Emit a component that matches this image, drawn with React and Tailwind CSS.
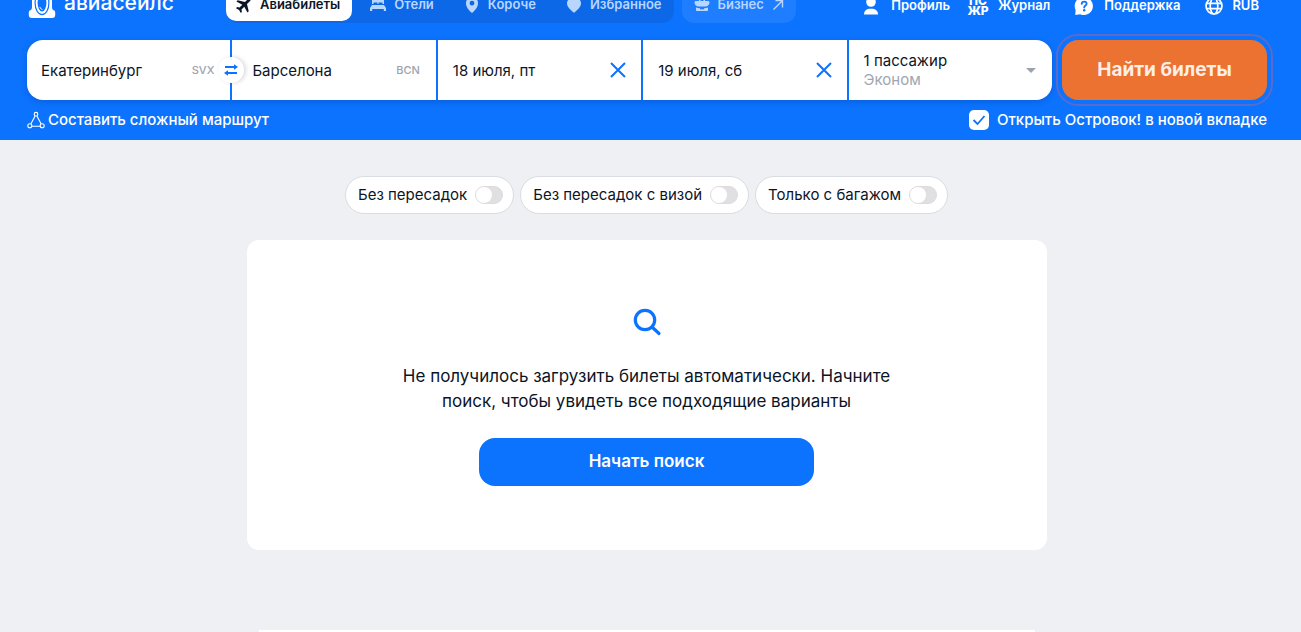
import React from "react";

const PlaneIcon = () => (
  <svg viewBox="0 0 16 16" className="size-4 shrink-0" fill="currentColor" aria-hidden="true">
    <g transform="rotate(45 8 8)">
      <path d="M8-1.2c.8 0 1.4.9 1.4 2v4.4l6.4 3.9v1.8L9.4 9v3.9l2 1.5v1.5L8 15l-3.4.9v-1.5l2-1.5V9L.2 10.900V9.100l6.400-3.900V.8c0-1.100.6-2 1.400-2z" />
    </g>
  </svg>
);

const BedIcon = () => (
  <svg viewBox="0 0 16 16" className="size-4 shrink-0" fill="currentColor" aria-hidden="true">
    <path d="M2 1h12v6h-1.500V5.500h-4V7h-1V5.500h-4V7H2z" />
    <path d="M2 8h12l2 3v3h-2.200v-2H2.200v2H0v-3z" />
  </svg>
);

const PinIcon = () => (
  <svg viewBox="0 0 16 16" className="size-4 shrink-0" fill="currentColor" aria-hidden="true">
    <path
      fillRule="evenodd"
      d="M8 0a6 6 0 0 1 6 6.200c0 4.100-3.300 7.300-5.300 9.300a1 1 0 0 1-1.400 0C5.300 13.500 2 10.300 2 6.200A6 6 0 0 1 8 0zm0 3.800a2.400 2.400 0 1 0 0 4.800 2.400 2.400 0 0 0 0-4.800z"
    />
  </svg>
);

const HeartIcon = () => (
  <svg viewBox="0 0 16 16" className="size-4 shrink-0" fill="currentColor" aria-hidden="true">
    <path d="M8 3C6 .5 1 1.500 1 6.300 1 10 4.500 13 7.200 15.200a1.200 1.200 0 0 0 1.600 0C11.500 13 15 10 15 6.300 15 1.500 10 .5 8 3z" />
  </svg>
);

const CaseIcon = () => (
  <svg viewBox="0 0 16 16" className="size-4 shrink-0" fill="currentColor" aria-hidden="true">
    <path
      fillRule="evenodd"
      d="M5 4V2.500C5 1.700 5.700 1 6.500 1h3c.8 0 1.500.7 1.500 1.500V4h3c.9 0 1.500.6 1.500 1.400 0 2.200-1.700 3.800-4.500 4.100H5C2.200 9.200.5 7.600.5 5.400.5 4.600 1.100 4 2 4zm1.500 0h3V2.500h-3z"
    />
    <path d="M2 10.600c1.200.5 2.500.7 4 .7v1h4v-1c1.500 0 2.800-.2 4-.7V13c0 .6-.4 1-1 1H3c-.6 0-1-.4-1-1z" />
  </svg>
);

const ArrowOutIcon = () => (
  <svg viewBox="0 0 12 12" className="size-3 shrink-0" fill="none" stroke="currentColor" strokeWidth="1.400" aria-hidden="true">
    <path d="M1.500 10.500 10.300 1.700M3.500 1.500h7v7" />
  </svg>
);

const UserIcon = () => (
  <svg viewBox="0 0 20 20" className="size-5 shrink-0" fill="currentColor" aria-hidden="true">
    <circle cx="10" cy="6" r="4.800" />
    <path d="M3 18.500c0-3.700 2.500-5.700 7-5.700s7 2 7 5.700z" />
  </svg>
);

const JournalIcon = () => (
  <span className="flex w-5 shrink-0 flex-col items-center text-[12px] leading-[10px] font-extrabold" aria-hidden="true">
    <span>ПС</span>
    <span>ЖР</span>
  </span>
);

const SupportIcon = () => (
  <svg viewBox="0 0 20 20" className="size-5 shrink-0" aria-hidden="true">
    <path fill="currentColor" d="M10 1a9 9 0 1 1-3.800 17.200L1.300 19l.3-5A9 9 0 0 1 10 1z" />
    <path
      fill="none"
      stroke="#0c73fe"
      strokeWidth="1.800"
      strokeLinecap="round"
      d="M7.700 7.900c.1-1.400 1.100-2.200 2.500-2.200s2.400.9 2.400 2.100c0 1.700-2.400 1.800-2.400 3.700"
    />
    <circle cx="10.200" cy="14.300" r="1.200" fill="#0c73fe" />
  </svg>
);

const GlobeIcon = () => (
  <svg viewBox="0 0 20 20" className="size-5 shrink-0" fill="none" stroke="currentColor" strokeWidth="1.700" aria-hidden="true">
    <circle cx="10" cy="10" r="8" />
    <ellipse cx="10" cy="10" rx="3.800" ry="8" />
    <path d="M2.500 7.300h15M2.500 12.700h15" />
  </svg>
);

const LogoMark = () => (
  <svg viewBox="0 0 28 32" className="h-8 w-7 shrink-0" fill="none" aria-hidden="true">
    <path
      fill="#fff"
      d="M4 2h20v17c0 2.500.3 3.800 1.700 4.300 1 .4 1.500 1.200 1.500 2.200V28c0 2-1 3-3 3H3.800c-2 0-3-1-3-3v-2.500c0-1 .5-1.800 1.500-2.200C3.700 22.800 4 21.500 4 19z"
    />
    <ellipse cx="14" cy="16" rx="6.900" ry="11.600" stroke="#0c73fe" strokeWidth="1.200" />
    <ellipse cx="14" cy="16" rx="4.400" ry="8.600" fill="#0c73fe" />
    <path stroke="#fff" strokeWidth="1" strokeLinecap="round" d="M12 20.300c.4 1.200 1 1.900 2 2.100" />
  </svg>
);

const CloseIcon = () => (
  <svg viewBox="0 0 16 16" className="size-4" fill="none" stroke="#0c73fe" strokeWidth="2" aria-hidden="true">
    <path d="M1 1l14 14M15 1 1 15" />
  </svg>
);

const RouteIcon = () => (
  <svg viewBox="0 0 18 18" className="size-[18px] shrink-0" fill="none" stroke="currentColor" strokeWidth="1.100" aria-hidden="true">
    <circle cx="9" cy="3.200" r="1.800" />
    <circle cx="2.800" cy="14.800" r="2" />
    <circle cx="15.200" cy="14.800" r="2" />
    <path d="M8.100 4.900 3.800 13M9.900 4.900l4.300 8.100M4.900 15.300h8.200" />
  </svg>
);

const tabs = [
  { label: "Отели", Icon: BedIcon },
  { label: "Короче", Icon: PinIcon },
  { label: "Избранное", Icon: HeartIcon },
];

const filters = ["Без пересадок", "Без пересадок с визой", "Только с багажом"];

function TopBar() {
  return (
    <div className="flex h-10 items-end overflow-hidden text-[13px] font-semibold whitespace-nowrap">
      <a href="#home" aria-label="авиасейлс" className="mb-[21px] flex w-[199px] shrink-0 items-center gap-2 pl-px text-white">
        <LogoMark />
        <span className="text-[21px] leading-7 font-medium">авиасейлс</span>
      </a>
      <nav className="mb-[17px] flex h-9 items-center rounded-xl bg-[#0c68e6] text-[#b9d6ff]">
        <a href="#flights" className="flex h-8 items-center gap-2 rounded-[10px] bg-white pr-3 pl-2.5 text-[#0b1526]">
          <PlaneIcon />
          Авиабилеты
        </a>
        {tabs.map(({ label, Icon }) => (
          <a key={label} href={"#" + label} className="ml-1.5 flex h-8 items-center gap-2 px-3">
            <Icon />
            {label}
          </a>
        ))}
      </nav>
      <a href="#business" className="mb-[17px] ml-2 flex h-9 items-center gap-2 rounded-xl bg-[#1f7dff] px-3 text-[#b9d6ff]">
        <CaseIcon />
        Бизнес
        <ArrowOutIcon />
      </a>
      <div className="mb-6 ml-auto flex items-center gap-6 pr-2 text-white">
        <div className="flex gap-[18px]">
          <a href="#profile" className="flex items-center gap-2.5">
            <UserIcon />
            Профиль
          </a>
          <a href="#journal" className="flex items-center gap-2.5">
            <JournalIcon />
            Журнал
          </a>
        </div>
        <a href="#support" className="flex items-center gap-2.5">
          <SupportIcon />
          Поддержка
        </a>
        <a href="#currency" className="flex items-center gap-2">
          <GlobeIcon />
          RUB
        </a>
      </div>
    </div>
  );
}

function CityField({ id, label, value, code, children }) {
  return (
    <div className="relative flex items-center bg-white pr-4 pl-3.5 [&+&]:pl-5">
      <label htmlFor={id} className="sr-only">{label}</label>
      <input id={id} defaultValue={value} className="h-full w-full min-w-0 flex-1 text-[15px] outline-none" />
      <span className="text-[11px] font-medium text-[#9da3ad]">{code}</span>
      {children}
    </div>
  );
}

function DateField({ id, label, value }) {
  return (
    <div className="flex items-center bg-white px-[15px]">
      <label htmlFor={id} className="sr-only">{label}</label>
      <input id={id} defaultValue={value} className="h-full w-full min-w-0 flex-1 text-[15px] outline-none" />
      <button type="button" aria-label="Очистить дату">
        <CloseIcon />
      </button>
    </div>
  );
}

function SwapButton() {
  return (
    <button
      type="button"
      aria-label="Поменять города местами"
      className="absolute top-1/2 -left-3.5 grid size-[26px] -translate-y-1/2 place-items-center rounded-full bg-white shadow-[2px_0_4px_rgba(0,0,0,0.15)]"
    >
      <svg viewBox="0 0 14 12" className="h-3 w-3.5" aria-hidden="true">
        <path d="M1 3h9M4 9h9" stroke="#0c73fe" strokeWidth="1.800" />
        <path d="M10 .2l4 2.800-4 2.800zM4 6.200 0 9l4 2.800z" fill="#0c73fe" />
      </svg>
    </button>
  );
}

function SearchForm() {
  return (
    <form className="grid grid-cols-[minmax(0,5fr)_minmax(0,1fr)] gap-2.5" onSubmit={(e) => e.preventDefault()}>
      <div className="grid h-[60px] grid-cols-5 gap-0.5 overflow-hidden rounded-2xl text-[#0b1526] shadow-[0_2px_6px_rgba(0,40,120,0.25)]">
        <CityField id="from" label="Откуда" value="Екатеринбург" code="SVX" />
        <CityField id="to" label="Куда" value="Барселона" code="BCN">
          <SwapButton />
        </CityField>
        <DateField id="depart" label="Когда" value="18 июля, пт" />
        <DateField id="return" label="Обратно" value="19 июля, сб" />
        <button type="button" className="flex items-center justify-between bg-white pr-4 pl-[15px] text-left text-[15px]">
          <span className="flex flex-col leading-[19px]">
            <span>1 пассажир</span>
            <span className="text-[#a0a6b1]">Эконом</span>
          </span>
          <svg viewBox="0 0 10 5" className="h-[5px] w-2.5" aria-hidden="true">
            <path d="M0 0h10L5 5z" fill="#9da3ad" />
          </svg>
        </button>
      </div>
      <button
        type="submit"
        className="h-[60px] rounded-2xl bg-[#ec7232] text-[19px] font-bold text-[#fdeee6] outline-2 outline-offset-4 outline-[#5b6bc8]"
      >
        Найти билеты
      </button>
    </form>
  );
}

export default function App() {
  return (
    <div className="min-h-screen bg-[#eef0f4] font-['Inter','Liberation_Sans',sans-serif] text-[#0b1526]">
      <header className="bg-[#0c73fe] pr-[34px] pl-[27px]">
        <TopBar />
        <SearchForm />
        <div className="flex h-10 items-center justify-between text-[15px] font-medium text-white">
          <a href="#multi" className="flex items-center gap-[3px]">
            <RouteIcon />
            Составить сложный маршрут
          </a>
          <label className="flex items-center gap-2">
            <span className="relative grid size-5 place-items-center">
              <input type="checkbox" defaultChecked className="peer size-5 appearance-none rounded-[5px] bg-white" />
              <svg viewBox="0 0 20 20" className="pointer-events-none absolute inset-0 hidden size-5 peer-checked:block" fill="none" aria-hidden="true">
                <path d="M4.500 10l4 4 7-8" stroke="#0c73fe" strokeWidth="1.800" />
              </svg>
            </span>
            Открыть Островок! в новой вкладке
          </label>
        </div>
      </header>

      <main className="flex flex-col items-center pt-9 pr-2">
        <div className="flex gap-1.5">
          {filters.map((name) => (
            <label key={name} className="flex h-[38px] items-center gap-2 rounded-full border border-[#d9dce1] bg-white pr-2.5 pl-3 text-[15px]">
              {name}
              <input
                type="checkbox"
                role="switch"
                className="h-[18px] w-7 appearance-none rounded-full border border-[#dcdcdf] bg-[#e0e0e3] before:block before:size-4 before:rounded-full before:bg-white checked:bg-[#0c73fe] checked:before:translate-x-2.5"
              />
            </label>
          ))}
        </div>

        <section className="mt-[26px] flex w-full max-w-[800px] flex-col items-center rounded-xl bg-white px-6 pt-[66px] pb-16">
          <svg viewBox="0 0 32 32" className="size-8" fill="none" stroke="#0c73fe" strokeWidth="3.200" strokeLinecap="round" aria-hidden="true">
            <circle cx="14" cy="14" r="9.700" />
            <path d="M21 21l7 6.500" />
          </svg>
          <p className="mt-[26px] max-w-[500px] text-center text-[17px] leading-[25px]">
            Не получилось загрузить билеты автоматически. Начните поиск, чтобы увидеть все подходящие варианты
          </p>
          <button type="button" className="mt-6 h-12 w-full max-w-[335px] rounded-2xl bg-[#0c73fe] text-[17px] font-semibold text-white">
            Начать поиск
          </button>
        </section>

        <section className="mt-20 h-0.5 w-full max-w-[776px] bg-white" />
      </main>
    </div>
  );
}
